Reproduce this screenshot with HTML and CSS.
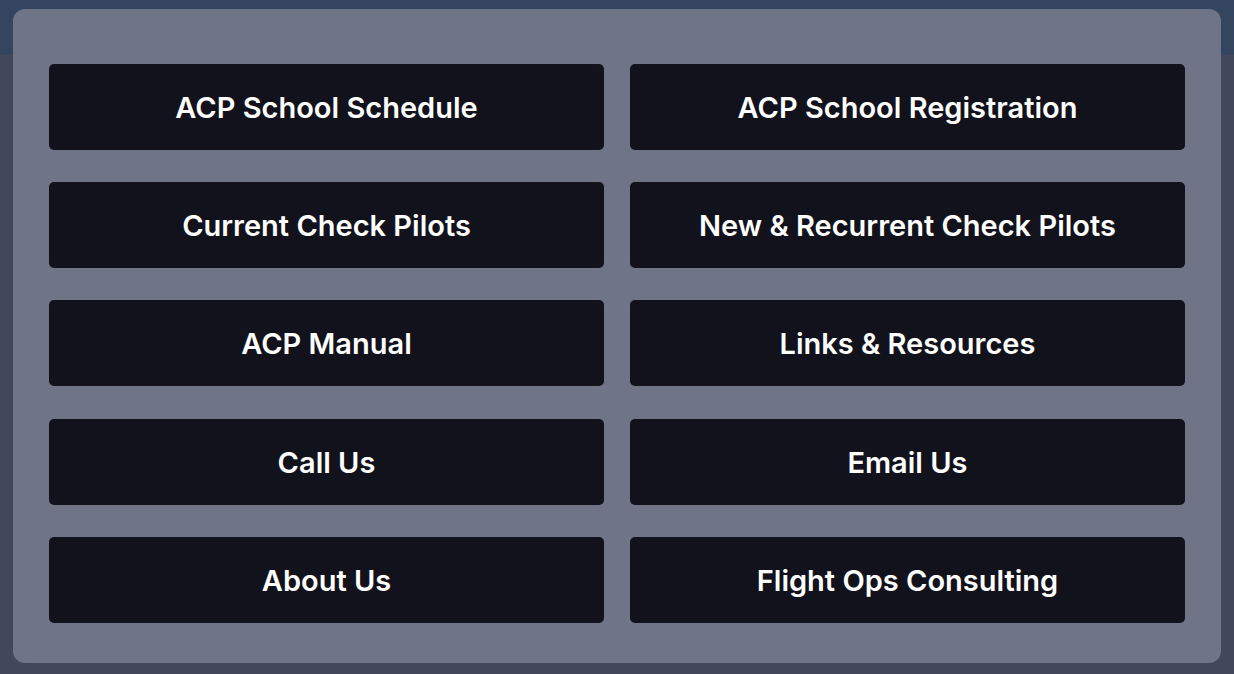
FILE: index.html
```html
<!DOCTYPE html>
<html lang="en">
    <head>
        <meta charset="utf-8">
        <title>ACP Menu</title>
        <link rel="stylesheet" href="styles.css">
    </head>
    <body>
        <div class="panel">
            <div class="menu">
                <a class="menu-btn" href="#">ACP School Schedule</a>
                <a class="menu-btn" href="#">ACP School Registration</a>
                <a class="menu-btn" href="#">Current Check Pilots</a>
                <a class="menu-btn" href="#">New &amp; Recurrent Check Pilots</a>
                <a class="menu-btn" href="#">ACP Manual</a>
                <a class="menu-btn" href="#">Links &amp; Resources</a>
                <a class="menu-btn" href="#">Call Us</a>
                <a class="menu-btn" href="#">Email Us</a>
                <a class="menu-btn" href="#">About Us</a>
                <a class="menu-btn" href="#">Flight Ops Consulting</a>
            </div>
        </div>
    </body>
</html>
```

FILE: styles.css
```css
html, body {
    margin: 0;
    height: 100%;
    font-family: Inter, 'Noto Sans', sans-serif;
}
body {
    background: linear-gradient(#33455f 0, #33455f 55px, #424859 55px);
    padding: 9px 13px 0;
    box-sizing: border-box;
}
.panel {
    background: #6f7587;
    border-radius: 12px;
    padding: 55px 36px 40px;
}
.menu {
    display: grid;
    grid-template-columns: 555px 555px;
    grid-auto-rows: 86px;
    gap: 32.2px 26px;
}
.menu-btn {
    display: flex;
    align-items: center;
    justify-content: center;
    padding-top: 1px;
    background: #12121c;
    border-radius: 5px;
    color: #fff;
    text-decoration: none;
    font-size: 29px;
    font-weight: 600;
}
```
